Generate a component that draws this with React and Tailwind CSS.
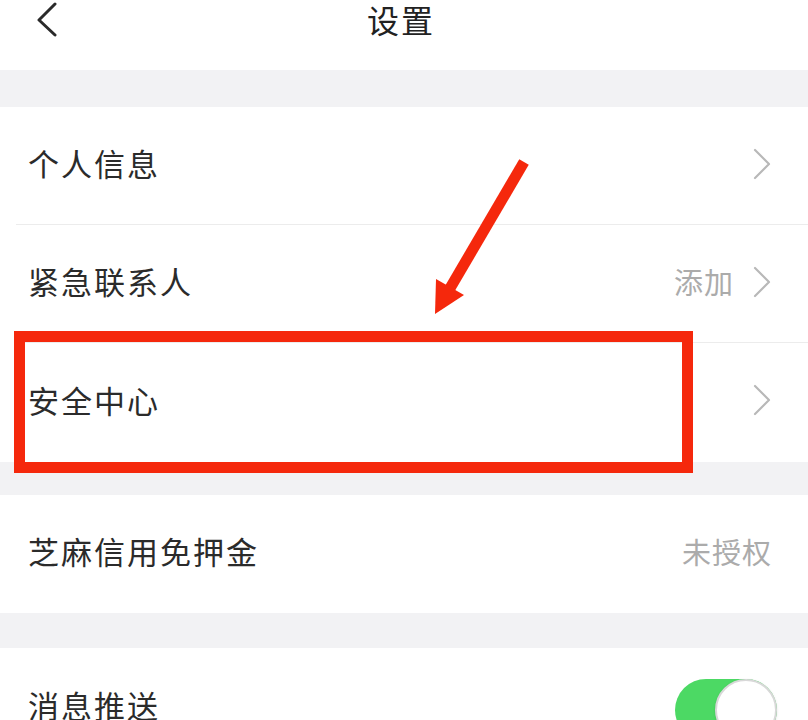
import React from 'react'

const font = { fontFamily: '"Noto Sans CJK SC", "Noto Sans", sans-serif' }

function Chevron() {
  return (
    <svg width="20" height="32" viewBox="0 0 20 32" className="shrink-0">
      <path d="M3 2 L17 16 L3 30" fill="none" stroke="#b8b8b8" strokeWidth="2.2" strokeLinecap="round" strokeLinejoin="round" />
    </svg>
  )
}

function Row({ label, value, arrow = true, divider = false, className = '' }) {
  return (
    <div className={`relative bg-white ${className}`}>
      <div className="flex h-full items-center justify-between pb-[5px] pl-[28px] pr-[36px]">
        <span className="text-[31px] tracking-[2px] text-[#2b2b2b]">{label}</span>
        <div className="flex items-center gap-[18px]">
          {value && <span className="text-[29px] tracking-[1px] text-[#ababab]">{value}</span>}
          {arrow && <Chevron />}
        </div>
      </div>
      {divider && <div className="absolute bottom-0 left-[16px] right-0 h-[1.5px] bg-[#ececec]" />}
    </div>
  )
}

export default function App() {
  return (
    <div style={font} className="relative h-[720px] w-[808px] overflow-hidden bg-white">
      {/* header */}
      <div className="relative flex h-[70px] items-start justify-center bg-white pt-[1px]">
        <svg width="26" height="36" viewBox="0 0 26 36" className="absolute left-[34px] top-[1px]">
          <path d="M21 3 L5 19 L21 34" fill="none" stroke="#2a2a2a" strokeWidth="3" strokeLinecap="round" strokeLinejoin="round" />
        </svg>
        <span className="pr-[6px] text-[32px] leading-[36px] tracking-[2px] text-[#222]">设置</span>
      </div>

      <div className="h-[37px] bg-[#f2f2f4]" />

      <Row label="个人信息" divider className="h-[118px]" />
      <Row label="紧急联系人" value="添加" divider className="h-[118px]" />
      <Row label="安全中心" className="h-[119px]" />

      <div className="h-[33px] bg-[#f2f2f4]" />

      <Row label="芝麻信用免押金" value="未授权" arrow={false} className="h-[118px]" />

      <div className="h-[35px] bg-[#f2f2f4]" />

      <div className="flex h-[120px] items-start justify-between bg-white pl-[28px] pr-[31px] pt-[34px]">
        <span className="text-[31px] tracking-[2px] text-[#2b2b2b]">消息推送</span>
        <div className="relative -mt-[3px] h-[62px] w-[102px] rounded-full bg-[#4cd964]">
          <div className="absolute right-0 top-0 h-[62px] w-[62px] rounded-full border-[2px] border-[#d8d8d8] bg-white shadow" />
        </div>
      </div>

      {/* annotation: red box */}
      <div className="absolute left-[14px] top-[331px] h-[142px] w-[679px] border-[11px] border-[#f5280c]" />

      {/* annotation: arrow */}
      <svg className="absolute left-0 top-0" width="808" height="720" viewBox="0 0 808 720">
        <line x1="524" y1="162" x2="449" y2="290" stroke="#f5280c" strokeWidth="11" />
        <polygon points="435,314 464,295 436,279" fill="#f5280c" />
      </svg>
    </div>
  )
}
